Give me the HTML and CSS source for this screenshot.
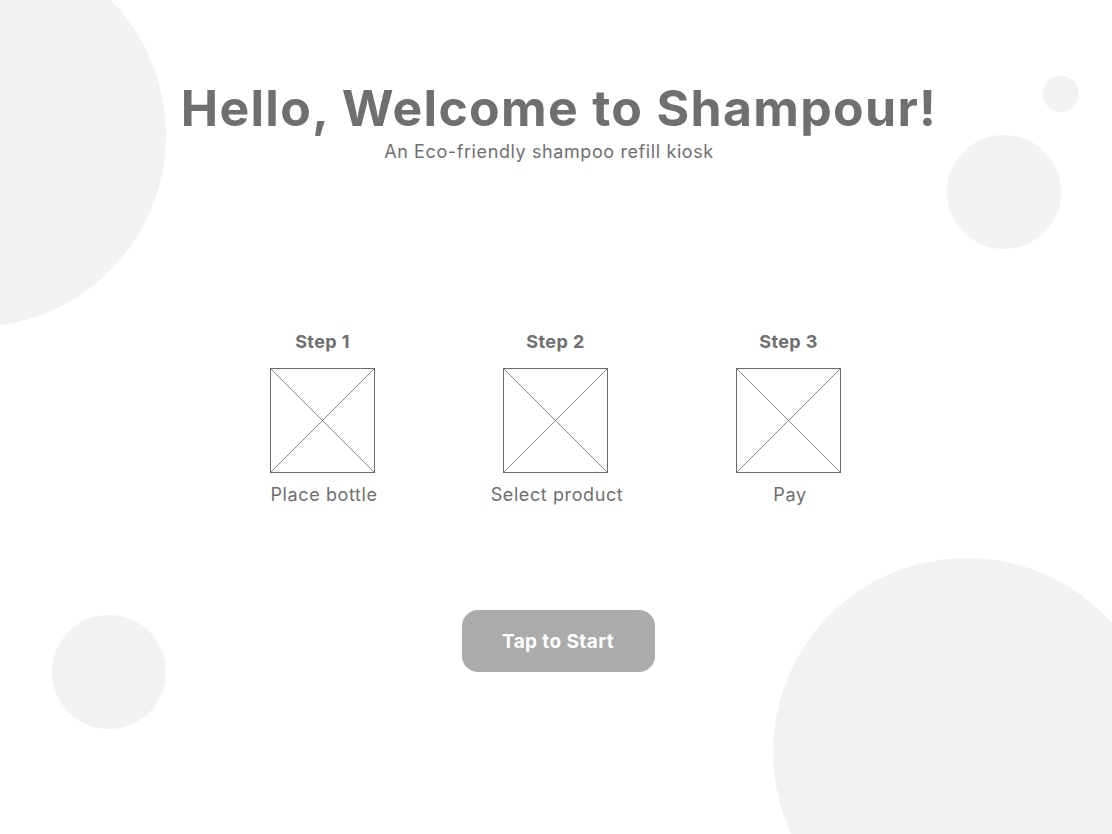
FILE: index.html
```html
<!DOCTYPE html>
<html lang="en">
<head>
<meta charset="utf-8">
<title>Shampour</title>
<link rel="stylesheet" href="styles.css">
</head>
<body>
<div class="screen">
  <div class="bubble bubble-tl"></div>
  <div class="bubble bubble-tr-small"></div>
  <div class="bubble bubble-tr-mid"></div>
  <div class="bubble bubble-bl"></div>
  <div class="bubble bubble-br"></div>

  <main class="content">
    <header class="hero">
      <h1 class="title">Hello, Welcome to Shampour!</h1>
      <p class="subtitle">An Eco-friendly shampoo refill kiosk</p>
    </header>

    <section class="steps">
      <div class="step">
        <div class="step-label">Step 1</div>
        <svg class="placeholder" width="105" height="105" viewBox="0 0 105 105"><rect x="0.5" y="0.5" width="104" height="104" fill="none" stroke="#6b6b6b" stroke-width="1"/><line x1="0.5" y1="0.5" x2="104.5" y2="104.5" stroke="#6b6b6b" stroke-width="0.8"/><line x1="104.5" y1="0.5" x2="0.5" y2="104.5" stroke="#6b6b6b" stroke-width="0.8"/></svg>
        <div class="step-caption">Place bottle</div>
      </div>
      <div class="step">
        <div class="step-label">Step 2</div>
        <svg class="placeholder" width="105" height="105" viewBox="0 0 105 105"><rect x="0.5" y="0.5" width="104" height="104" fill="none" stroke="#6b6b6b" stroke-width="1"/><line x1="0.5" y1="0.5" x2="104.5" y2="104.5" stroke="#6b6b6b" stroke-width="0.8"/><line x1="104.5" y1="0.5" x2="0.5" y2="104.5" stroke="#6b6b6b" stroke-width="0.8"/></svg>
        <div class="step-caption">Select product</div>
      </div>
      <div class="step">
        <div class="step-label">Step 3</div>
        <svg class="placeholder" width="105" height="105" viewBox="0 0 105 105"><rect x="0.5" y="0.5" width="104" height="104" fill="none" stroke="#6b6b6b" stroke-width="1"/><line x1="0.5" y1="0.5" x2="104.5" y2="104.5" stroke="#6b6b6b" stroke-width="0.8"/><line x1="104.5" y1="0.5" x2="0.5" y2="104.5" stroke="#6b6b6b" stroke-width="0.8"/></svg>
        <div class="step-caption">Pay</div>
      </div>
    </section>

    <button class="start-btn" type="button">Tap to Start</button>
  </main>
</div>
</body>
</html>
```

FILE: styles.css
```css
html, body {
  margin: 0;
  padding: 0;
  background: #ffffff;
}

.screen {
  position: relative;
  width: 1112px;
  height: 834px;
  overflow: hidden;
  font-family: "Inter", "Roboto", "Liberation Sans", sans-serif;
  color: #6f6f6f;
}

.bubble {
  position: absolute;
  border-radius: 50%;
  background: #f2f2f2;
}

.bubble-tl { left: -218px; top: -57px; width: 384px; height: 384px; }
.bubble-tr-small { left: 1043px; top: 76px; width: 36px; height: 36px; }
.bubble-tr-mid { left: 947px; top: 135px; width: 114px; height: 114px; }
.bubble-bl { left: 52px; top: 615px; width: 114px; height: 114px; }
.bubble-br { left: 773px; top: 558px; width: 388px; height: 388px; }

.content {
  position: relative;
  display: flex;
  flex-direction: column;
  align-items: center;
  padding-top: 78px;
}

.hero {
  display: flex;
  flex-direction: column;
  align-items: center;
  padding-left: 6px;
}

.title {
  margin: 0;
  font-size: 50px;
  font-weight: 700;
  line-height: 60px;
  letter-spacing: 1.3px;
  color: #6f6f6f;
}

.subtitle {
  margin: 2px 0 0 -20px;
  font-size: 18px;
  line-height: 24px;
  letter-spacing: 0.6px;
  color: #707070;
}

.steps {
  display: flex;
  gap: 128px;
  margin-top: 166px;
  margin-left: -2px;
}

.step {
  width: 105px;
  display: flex;
  flex-direction: column;
  align-items: center;
}

.step-label {
  font-size: 18px;
  font-weight: 700;
  line-height: 24px;
  letter-spacing: 0.4px;
  white-space: nowrap;
  margin-bottom: 14px;
  padding-left: 1px;
}

.placeholder {
  display: block;
}

.step-caption {
  font-size: 18px;
  line-height: 24px;
  letter-spacing: 0.6px;
  white-space: nowrap;
  margin-top: 10px;
  padding-left: 4px;
}

.start-btn {
  margin-top: 103px;
  margin-left: 4px;
  width: 193px;
  height: 62px;
  border: none;
  border-radius: 16px;
  background: #ababab;
  color: #ffffff;
  font-family: inherit;
  font-size: 19px;
  font-weight: 700;
  letter-spacing: 0.4px;
  padding: 0;
}
```
